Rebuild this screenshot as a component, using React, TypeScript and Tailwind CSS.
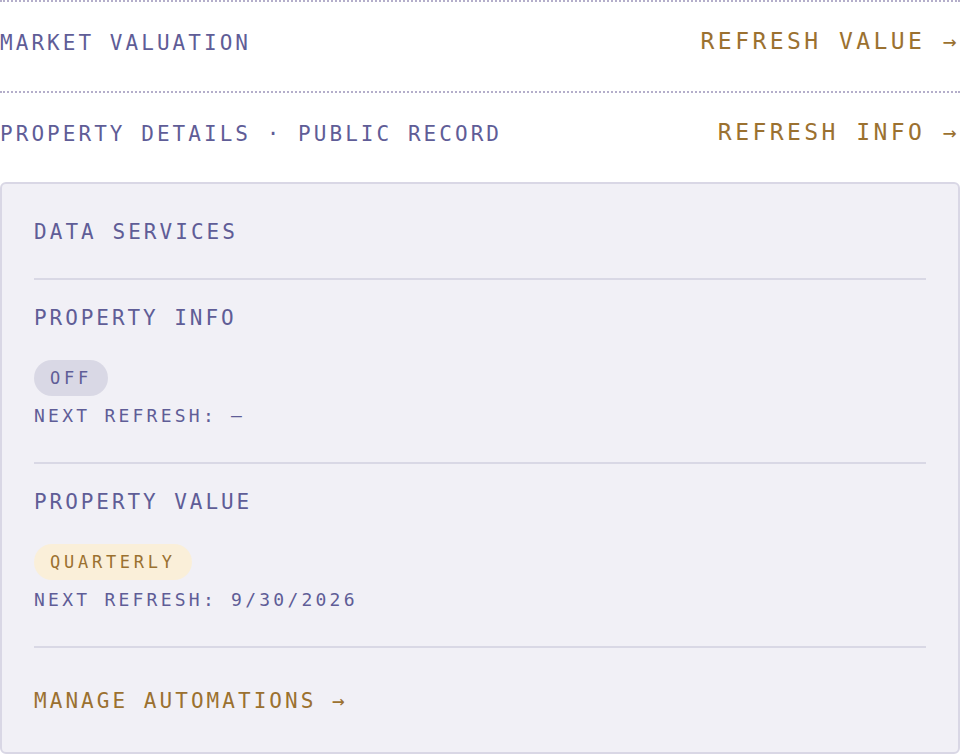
import React from 'react';

const mono = { fontFamily: '"DejaVu Sans Mono", "Liberation Mono", monospace' };

function TopRow({ label, action }: { label: string; action: string }) {
  return (
    <div className="h-[91px] border-t-2 border-dotted border-[#b4aeca] flex justify-between items-start">
      <span className="pt-[31px] text-[21px] leading-none tracking-[0.145em] text-[#5f5d97]">{label}</span>
      <span className="pt-[28px] text-[23px] leading-none tracking-[0.15em] text-[#9b7130]">{action}</span>
    </div>
  );
}

function Service({ title, pill, tone, next }: { title: string; pill: string; tone: 'off' | 'on'; next: string }) {
  return (
    <div className="pt-[28px] pb-[37px] border-b-2 border-[#d9d8e5] flex flex-col items-start">
      <div className="text-[21px] leading-none tracking-[0.14em] text-[#5f5d97]">{title}</div>
      <span
        className={
          tone === 'off'
            ? 'mt-[31px] h-9 px-4 rounded-full flex items-center bg-[#d9d8e5] text-[#5f5d97] text-[17px] leading-none tracking-[0.22em]'
            : 'mt-[31px] h-9 px-4 rounded-full flex items-center bg-[#faefd9] text-[#9b7130] text-[17px] leading-none tracking-[0.22em]'
        }
      >
        {pill}
      </span>
      <div className="mt-[11px] text-[18px] leading-none tracking-[0.18em] text-[#5f5d97]">{next}</div>
    </div>
  );
}

export default function App() {
  return (
    <div style={mono} className="w-[960px] h-[754px] bg-white overflow-hidden">
      <TopRow label="MARKET VALUATION" action="REFRESH VALUE →" />
      <TopRow label="PROPERTY DETAILS · PUBLIC RECORD" action="REFRESH INFO →" />

      <div className="border-2 border-[#d9d7e5] rounded-md bg-[#f1f0f6] px-8 pt-[38px] pb-[40px]">
        <div className="pb-[35px] border-b-2 border-[#d9d8e5] text-[21px] leading-none tracking-[0.145em] text-[#5f5d97]">
          DATA SERVICES
        </div>
        <Service title="PROPERTY INFO" pill="OFF" tone="off" next="NEXT REFRESH: —" />
        <Service title="PROPERTY VALUE" pill="QUARTERLY" tone="on" next="NEXT REFRESH: 9/30/2026" />
        <div className="pt-[43px] text-[21px] leading-none tracking-[0.145em] text-[#9b7130]">MANAGE AUTOMATIONS →</div>
      </div>
    </div>
  );
}
